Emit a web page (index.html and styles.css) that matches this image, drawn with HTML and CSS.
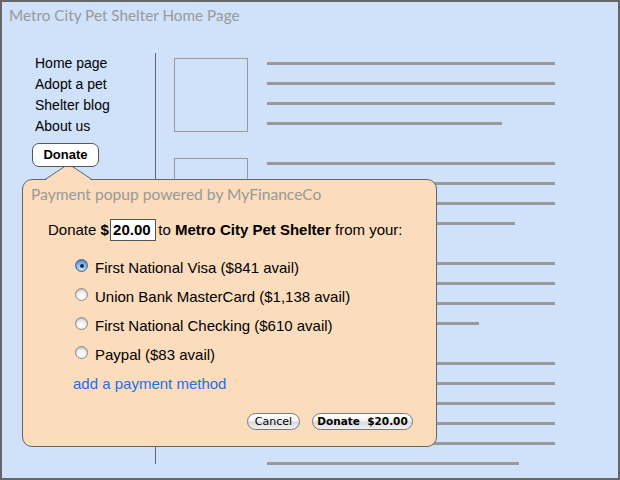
FILE: index.html
```html
<!DOCTYPE html>
<html>
<head>
<meta charset="utf-8">
<link rel="stylesheet" href="styles.css">
</head>
<body>
<div class="frame">
  <header class="header">Metro City Pet Shelter Home Page</header>
  <div class="main">
    <nav class="nav">
      <div class="nav-item">Home page</div>
      <div class="nav-item">Adopt a pet</div>
      <div class="nav-item">Shelter blog</div>
      <div class="nav-item">About us</div>
      <button class="donate-btn">Donate</button>
    </nav>
    <div class="divider"></div>
    <div class="content">
      <div class="group">
        <div class="thumb"></div>
        <div class="lines">
          <div class="line"></div><div class="line"></div><div class="line"></div>
          <div class="line" style="width:235px"></div>
        </div>
      </div>
      <div class="group">
        <div class="thumb"></div>
        <div class="lines">
          <div class="line"></div><div class="line"></div><div class="line"></div>
          <div class="line" style="width:248px"></div>
        </div>
      </div>
      <div class="group">
        <div class="thumb"></div>
        <div class="lines">
          <div class="line"></div><div class="line"></div><div class="line"></div>
          <div class="line" style="width:212px"></div>
        </div>
      </div>
      <div class="group">
        <div class="thumb"></div>
        <div class="lines">
          <div class="line"></div><div class="line"></div><div class="line"></div>
          <div class="line"></div><div class="line"></div>
          <div class="line" style="width:252px"></div>
        </div>
      </div>
    </div>
  </div>

  <div class="popup">
    <svg class="arrow" width="48" height="18" viewBox="0 0 48 18">
      <polygon points="0,17.5 23.5,1 47,17.5" fill="#fbdcbd"/>
      <polyline points="0,16.5 23.5,1 47,16.5" fill="none" stroke="#666" stroke-width="1"/>
    </svg>
    <div class="popup-title">Payment popup powered by MyFinanceCo</div>
    <div class="amount-line">Donate <b>$</b> <span class="amount">20.00</span> to <b>Metro City Pet Shelter</b> from your:</div>
    <div class="options">
      <div class="option"><span class="radio checked"></span>First National Visa ($841 avail)</div>
      <div class="option"><span class="radio"></span>Union Bank MasterCard ($1,138 avail)</div>
      <div class="option"><span class="radio"></span>First National Checking ($610 avail)</div>
      <div class="option"><span class="radio"></span>Paypal ($83 avail)</div>
      <div class="add-link">add a payment method</div>
    </div>
    <div class="actions">
      <button class="aqua cancel">Cancel</button>
      <button class="aqua primary">Donate&nbsp;&nbsp;$20.00</button>
    </div>
  </div>
</div>
</body>
</html>
```

FILE: styles.css
```css
html, body {
  margin: 0;
  padding: 0;
}
body {
  font-family: "Liberation Sans", Arial, sans-serif;
  font-size: 14px;
  color: #000;
}
.frame {
  position: relative;
  box-sizing: border-box;
  width: 620px;
  height: 480px;
  border: 2px solid #666;
  background: #cfe2f9;
  overflow: hidden;
}
.header {
  height: 51px;
  box-sizing: border-box;
  padding: 3px 0 0 7px;
  font-family: Lato, "Open Sans", sans-serif;
  font-size: 15.3px;
  line-height: 20px;
  color: #999;
}
.main {
  display: flex;
  height: 411px;
  padding-left: 33px;
}
.nav {
  width: 120px;
  display: flex;
  flex-direction: column;
  align-items: flex-start;
}
.nav-item {
  line-height: 21px;
  font-size: 14px;
}
.donate-btn {
  position: relative;
  z-index: 3;
  margin: 6px 0 0 -3px;
  width: 67px;
  height: 24px;
  box-sizing: border-box;
  border: 1px solid #555;
  border-radius: 7px;
  background: #fff;
  font-family: "Liberation Sans", Arial, sans-serif;
  font-weight: bold;
  font-size: 13px;
  line-height: 20px;
  padding: 0;
  color: #000;
}
.divider {
  width: 1px;
  background: #666;
}
.content {
  padding: 5px 0 0 18px;
  display: flex;
  flex-direction: column;
}
.group {
  display: flex;
  gap: 19px;
  margin-bottom: 26px;
}
.thumb {
  width: 74px;
  height: 74px;
  box-sizing: border-box;
  border: 1px solid #999;
  flex: none;
}
.lines {
  padding-top: 4px;
  display: flex;
  flex-direction: column;
  gap: 17px;
}
.line {
  width: 288px;
  height: 3px;
  background: #999;
}

.popup {
  position: absolute;
  z-index: 2;
  left: 20px;
  top: 177px;
  width: 415px;
  height: 268px;
  box-sizing: border-box;
  border: 1px solid #666;
  border-radius: 10px;
  background: #fbdcbd;
  font-size: 15px;
}
.arrow {
  position: absolute;
  left: 22px;
  top: -17px;
}
.popup-title {
  padding: 4px 0 0 8px;
  font-family: Lato, "Open Sans", sans-serif;
  font-size: 15.6px;
  line-height: 20px;
  color: #999;
}
.amount-line {
  margin-top: 15px;
  padding-left: 25px;
  line-height: 22px;
  height: 22px;
}
.amount {
  display: inline-block;
  box-sizing: border-box;
  width: 46px;
  height: 22px;
  line-height: 20px;
  border: 1px solid #555;
  background: #fff;
  font-weight: bold;
  padding-left: 2px;
  margin: 0 -2px 0 -3px;
  vertical-align: top;
}
.options {
  margin-top: 12px;
  padding-left: 52px;
}
.option {
  display: flex;
  align-items: center;
  gap: 7px;
  height: 29px;
  line-height: 29px;
}
.radio {
  width: 13px;
  height: 13px;
  box-sizing: border-box;
  border-radius: 50%;
  border: 1px solid #8a8a8a;
  background: radial-gradient(circle at 50% 70%, #ffffff 0%, #f2f2f2 40%, #c9c9c9 100%);
  box-shadow: inset 0 1px 1px rgba(0,0,0,0.15);
  position: relative;
  margin-top: -4px;
}
.radio.checked {
  border-color: #44679b;
  background: radial-gradient(circle at 50% 75%, #d8ecff 0%, #8fbcf0 40%, #3f7fd0 100%);
}
.radio.checked::after {
  content: "";
  position: absolute;
  left: 3.5px;
  top: 3.5px;
  width: 4px;
  height: 4px;
  border-radius: 50%;
  background: #1b2a40;
}
.add-link {
  margin-left: -2px;
  height: 29px;
  line-height: 29px;
  color: #1f6fe6;
}
.actions {
  margin-top: 15px;
  display: flex;
  justify-content: flex-end;
  gap: 12px;
  padding-right: 23px;
}
.aqua {
  height: 17px;
  box-sizing: border-box;
  border: 1px solid #7a7a7a;
  border-radius: 9px;
  background: linear-gradient(#ffffff 0%, #f4f4f4 45%, #dcdcdc 55%, #f0f0f0 100%);
  font-family: "DejaVu Sans", Verdana, sans-serif;
  font-size: 11px;
  line-height: 15px;
  padding: 0;
  color: #000;
}
.cancel {
  width: 53px;
}
.primary {
  width: 101px;
  font-weight: bold;
  font-size: 10.5px;
}
```
